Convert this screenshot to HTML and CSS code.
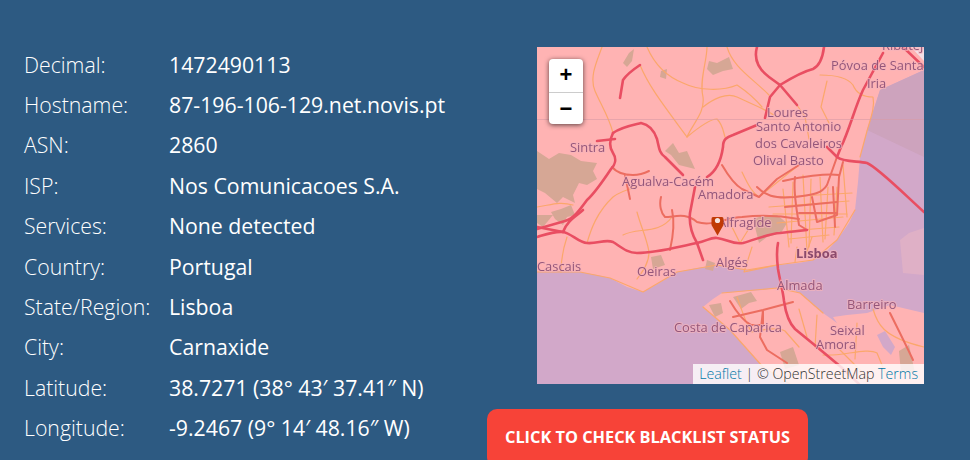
FILE: index.html
```html
<!DOCTYPE html>
<html lang="en-US">
  <head>
    <meta charset="utf-8" />
    <meta name="viewport" content="width=device-width" />
    <title>IP details</title>
    <link rel="stylesheet" href="styles.css">
  </head>

  <body>
    <main class="page">
      <dl class="details">
        <dt>Decimal:</dt><dd>1472490113</dd>
        <dt>Hostname:</dt><dd>87-196-106-129.net.novis.pt</dd>
        <dt>ASN:</dt><dd>2860</dd>
        <dt>ISP:</dt><dd>Nos Comunicacoes S.A.</dd>
        <dt>Services:</dt><dd>None detected</dd>
        <dt>Country:</dt><dd>Portugal</dd>
        <dt>State/Region:</dt><dd>Lisboa</dd>
        <dt>City:</dt><dd>Carnaxide</dd>
        <dt>Latitude:</dt><dd>38.7271 (38° 43′ 37.41″ N)</dd>
        <dt>Longitude:</dt><dd>-9.2467 (9° 14′ 48.16″ W)</dd>
      </dl>

      <section class="side">
        <div class="map">
          <svg class="map-art" viewBox="0 0 387 337" width="387" height="337">
            <rect width="387" height="337" fill="#ffb3b3" />

            <!-- water -->
            <path class="water" d="M0 225 L20 224 L43 225 L60 228 L73 231 L90 240 L106 245 L122 236 L140 225 L160 221 L180 218 L195 221 L210 223 L225 221 L240 218 L262 216 L276 213 L290 204 L300 193 L312 176 L318 163 L321 135 L323 110 L330 83 L343 43 L387 23 L387 337 L0 337 Z" />
            <path class="land" d="M166 260 L176 252 L185 246 L210 244 L226 243 L240 241 L252 242 L263 246 L276 258 L286 266 L300 276 L296 270 L310 268 L330 266 L353 258 L370 262 L387 266 L387 337 L253 337 L240 328 L226 320 L212 304 L193 283 Z" />
            <path class="water" d="M340 288 L348 284 L358 300 L354 308 L346 300 Z" />
            <path class="faint" d="M363 193 L372 186 L387 181 L387 228 L366 226 Z" />
            <path class="shallow" d="M330 83 L343 43 L387 23 L387 110 Z" />
            <path class="corner" d="M374 0 H387 V14 Z" />

            <!-- woods and built up bits -->
            <g class="woods">
              <path d="M0 104 L12 112 L22 106 L34 108 L44 114 L60 116 L56 124 L60 132 L50 138 L42 136 L36 148 L38 156 L26 150 L20 156 L8 146 L0 142 Z" />
              <path d="M14 165 L24 162 L34 158 L38 168 L30 170 L26 178 L18 172 Z" />
              <path d="M172 14 L180 16 L192 10 L196 22 L186 24 L176 28 L170 22 Z" />
              <path d="M92 6 L97 2 L95 14 L90 20 L86 16 Z" />
              <path d="M136 96 L142 106 L150 104 L158 122 L150 120 L142 118 L134 108 L128 104 Z" />
              <path d="M124 24 L130 22 L129 32 L123 30 Z" />
              <path d="M216 172 L228 168 L240 168 L250 176 L244 186 L230 190 L222 196 Z" />
              <path d="M170 213 L178 216 L176 224 L168 222 Z" />
              <path d="M114 210 L124 208 L128 218 L116 222 Z" />
              <path d="M196 250 L214 245 L220 254 L212 256 L204 262 Z" />
              <path d="M172 258 L184 256 L186 266 L178 270 Z" />
              <path d="M243 305 L256 300 L262 318 L248 322 Z" />
              <path d="M362 304 L372 298 L378 326 L364 326 Z" />
              <path d="M16 168 L6 180 L0 176 L0 168 Z" />
            </g>

            <!-- minor roads -->
            <g class="minor">
              <path d="M65 0 C 60 14 52 30 58 44 C 64 58 72 70 76 86" />
              <path d="M103 18 C 112 40 128 60 150 90 C 156 76 168 66 166 50 C 162 34 170 14 170 0" />
              <path d="M166 60 C 176 52 190 45 200 50 C 212 56 225 60 240 70" />
              <path d="M150 90 C 162 80 174 72 180 72 C 186 78 186 84 188 90" />
              <path d="M110 0 C 116 14 126 28 146 36 C 162 44 186 44 200 38 C 212 46 220 54 225 60" />
              <path d="M190 0 C 196 20 214 30 232 48" />
              <path d="M283 28 C 296 28 310 30 316 38 C 320 48 330 50 336 50 C 338 60 334 70 330 84 L323 110" />
              <path d="M260 58 L268 70 L272 92 M290 34 L284 60 L292 76" />
              <path d="M30 190 C 26 202 24 214 24 225" />
              <path d="M50 196 C 54 182 60 165 76 150 C 84 144 92 142 100 140" />
              <path d="M100 165 C 104 180 110 192 112 205 C 112 216 106 224 100 232" />
              <path d="M86 188 C 100 180 122 188 135 170" />
              <path d="M0 160 C 14 158 22 154 36 158" />
              <path d="M0 225 L43 225 L73 231 L106 245 L140 225 L180 218 L210 223 L240 218 L276 213 L300 193 L318 163" />
              <path d="M166 260 L193 283 L226 320 L253 337" />
              <path d="M185 246 L240 241 L263 246 L286 266" />
              <path d="M200 250 C 206 266 210 280 215 285 C 228 282 240 280 248 284 L262 300" />
              <path d="M286 308 C 304 310 330 300 340 306 L350 330" />
              <path d="M213 180 L203 196 L190 170" />
              <path d="M336 262 C 340 276 345 290 387 300" />
              <path d="M205 125 C 212 140 216 146 222 150 C 232 142 244 132 262 118" />
              <path d="M246 142 L252 200 M256 135 L254 196 M266 128 L270 205 M274 132 L272 200 M283 130 L286 195 M291 140 L288 192 M300 140 L297 188 M306 118 L310 170" />
              <path d="M232 160 L312 154 M236 167 L310 167 M240 176 L306 170 M250 184 L302 180 M245 150 L315 146 M252 192 L292 188" />
              <path d="M215 200 L207 225 L240 218 M260 200 L258 215 M275 190 L268 210" />
              <path d="M262 262 L270 290 M280 268 L278 300 M320 276 L318 312 M300 300 L330 330" />
            </g>

            <!-- motorways -->
            <g class="salmon">
              <path d="M135 163 C 138 176 136 190 133 203" />
              <path d="M124 150 C 122 158 124 166 128 170 C 138 170 148 165 160 175 C 176 180 190 170 205 170 C 222 168 240 168 262 172" />
              <path d="M75 120 C 80 126 88 128 96 128 C 104 128 108 126 112 124 M88 128 L93 152" />
              <path d="M220 140 C 228 148 236 152 258 150 C 272 148 284 148 290 138 L300 110" />
              <path d="M185 118 C 192 130 198 138 205 142 L222 150 L240 132 L262 118" />
              <path d="M258 130 C 256 146 260 164 262 178 L270 183 M275 150 L280 175 L300 168 L302 130 L306 115" />
              <path d="M296 140 L298 180 M248 160 L300 155" />
              <path d="M246 134 C 262 130 290 126 302 128 M262 166 L300 166" />
              <path d="M196 270 L226 263 L256 255 M193 254 C 200 266 206 274 214 278 L226 278 L226 263 L223 290 L230 303 L250 316" />
              <path d="M353 266 C 360 280 368 296 376 313" />
            </g>
            <g class="major">
              <path d="M76 86 C 84 80 96 78 104 76 C 114 78 118 86 120 92 C 122 100 122 106 128 110 L146 128" />
              <path d="M103 18 C 94 24 88 30 86 33 L83 51" />
              <path d="M76 86 C 72 94 72 100 76 106 C 80 112 78 118 74 122 C 66 134 58 146 50 153 C 42 164 36 172 28 174 L0 182" />
              <path d="M60 94 L78 92" />
              <path d="M170 130 C 180 124 184 114 186 100 C 186 92 190 90 196 88 L220 78" />
              <path d="M158 140 L153 166 C 152 176 154 186 160 196 L166 213" />
              <path d="M220 0 C 216 14 224 24 232 30 L243 38 C 256 30 268 24 276 22 C 284 18 286 8 287 0" />
              <path d="M243 38 L233 50 L228 71 M243 38 L260 58" />
              <path d="M346 6 L326 43 C 318 60 312 84 304 100 L300 110 C 306 115 320 114 330 116 C 340 120 364 144 387 165" />
              <path d="M366 0 L387 20" />
              <path d="M290 100 L300 110" />
              <path d="M0 190 C 10 187 18 184 26 185 C 34 186 42 196 50 196 C 60 197 68 192 76 195 C 84 200 90 206 100 206 C 120 206 140 200 160 196 C 170 194 174 190 180 191 C 190 192 196 198 206 196 C 220 192 234 186 243 186 L270 183" />
              <path d="M241 196 C 239 206 240 214 241 222 C 243 234 246 244 247 254 C 249 268 252 276 258 282 L280 300 L304 320 L322 337" />
              <path d="M26 185 C 30 174 38 170 46 163" />
              <path d="M0 180 L26 185" />
            </g>

            <path class="seam" d="M0 72.5 H387" />

            <!-- place names -->
            <g class="places">
              <text x="345" y="3">Ribatejo</text>
              <text x="294" y="23">Póvoa de Santa</text>
              <text x="330" y="41">Iria</text>
              <text x="230" y="70">Loures</text>
              <text x="219" y="84">Santo Antonio</text>
              <text x="218" y="101">dos Cavaleiros</text>
              <text x="216" y="118">Olival Basto</text>
              <text x="33" y="105">Sintra</text>
              <text x="85" y="139">Agualva-Cacém</text>
              <text x="161" y="152">Amadora</text>
              <text x="181" y="180">Alfragide</text>
              <text x="0" y="224">Cascais</text>
              <text x="100" y="229">Oeiras</text>
              <text x="179" y="220">Algés</text>
              <text class="capital" x="259" y="211">Lisboa</text>
              <text x="240" y="243">Almada</text>
              <text x="310" y="262">Barreiro</text>
              <text x="137" y="285">Costa de Caparica</text>
              <text x="293" y="288">Seixal</text>
              <text x="279" y="302">Amora</text>
            </g>

            <!-- pin -->
            <path class="pin" d="M176 170 H185 Q186.500 170 186.500 172 V178 L180.500 188.500 L174.500 178 V172 Q174.500 170 176 170 Z" />
            <circle class="pin-dot" cx="180.500" cy="173.500" r="2.600" />
          </svg>

          <div class="zoom">
            <button class="zoom-btn" type="button">+</button>
            <button class="zoom-btn" type="button">−</button>
          </div>

          <div class="attribution">
            <a href="#">Leaflet</a> | © OpenStreetMap <a href="#">Terms</a>
          </div>
        </div>

        <a class="check" href="#">Click to check blacklist status</a>
      </section>
    </main>
  </body>
</html>
```

FILE: styles.css
```css
html,
body {
  height: 100%;
}

body {
  margin: 0;
  overflow: hidden;
  background-color: #2d5a82;
  color: #fff;
  font-family: "Open Sans", "Liberation Sans", sans-serif;
}

.page {
  display: flex;
  align-items: flex-start;
}

/* left column */
.details {
  display: grid;
  grid-template-columns: 145px auto;
  grid-auto-rows: 40.4px;
  align-items: center;
  width: 487px;
  margin: 44px 0 0;
  padding-left: 24px;
  box-sizing: border-box;
  font-size: 21.28px;
}

.details dt {
  font-weight: 300;
}

.details dd {
  margin: 0;
}

/* right column */
.side {
  display: flex;
  flex-direction: column;
  align-items: flex-start;
  gap: 25px;
  padding-top: 47px;
}

.map {
  position: relative;
  width: 387px;
  height: 337px;
  margin-left: 50px;
  overflow: hidden;
}

.map-art {
  display: block;
  filter: blur(0.45px);
}

.water {
  fill: #d2a8c9;
}

.land {
  fill: #ffb3b3;
}

.faint {
  fill: #dfb0c6;
}

.shallow {
  fill: #cda3bd;
}

.corner {
  fill: #f3dfe6;
}

.woods {
  fill: #d6a795;
}

.minor,
.salmon,
.major {
  fill: none;
  stroke-linecap: round;
  stroke-linejoin: round;
}

.minor {
  stroke: #fba76b;
  stroke-width: 1.200;
}

.salmon {
  stroke: #ec6d60;
  stroke-width: 2;
}

.major {
  stroke: #e94e62;
  stroke-width: 2.600;
}

.seam {
  stroke: #d99aa6;
  stroke-width: 0.600;
}

.places text {
  font-size: 12.900px;
  fill: #94567a;
  stroke: #f5b4bb;
  stroke-width: 2px;
  stroke-opacity: 0.700;
  paint-order: stroke;
}

.places .capital {
  font-weight: 700;
  fill: #8c4a6c;
}

.pin {
  fill: #c03a05;
}

.pin-dot {
  fill: #f4e4e0;
}

/* map controls */
.zoom {
  position: absolute;
  top: 12px;
  left: 12px;
  width: 34px;
  border-radius: 4px;
  background-color: #fff;
  box-shadow: 0 1px 5px rgba(0, 0, 0, 0.65);
}

.zoom-btn {
  display: block;
  width: 34px;
  height: 32.500px;
  padding: 0;
  border: 0;
  background: none;
  color: #000;
  font: 700 22px/32px "Liberation Sans", sans-serif;
}

.zoom-btn + .zoom-btn {
  border-top: 1px solid #ccc;
}

.attribution {
  position: absolute;
  right: 0;
  bottom: 0;
  height: 20px;
  padding: 0 6px;
  background-color: rgba(255, 255, 255, 0.8);
  color: #333;
  font-size: 14.200px;
  font-weight: 300;
  line-height: 20px;
  white-space: nowrap;
}

.attribution a {
  color: #0078a8;
  text-decoration: none;
}

/* button runs off the bottom of the window */
.check {
  display: block;
  padding: 18px 18px 20px;
  border-radius: 10px;
  background-color: #f74338;
  color: #fff;
  font-size: 16.320px;
  font-weight: 700;
  line-height: 20px;
  text-transform: uppercase;
  text-decoration: none;
}
```
